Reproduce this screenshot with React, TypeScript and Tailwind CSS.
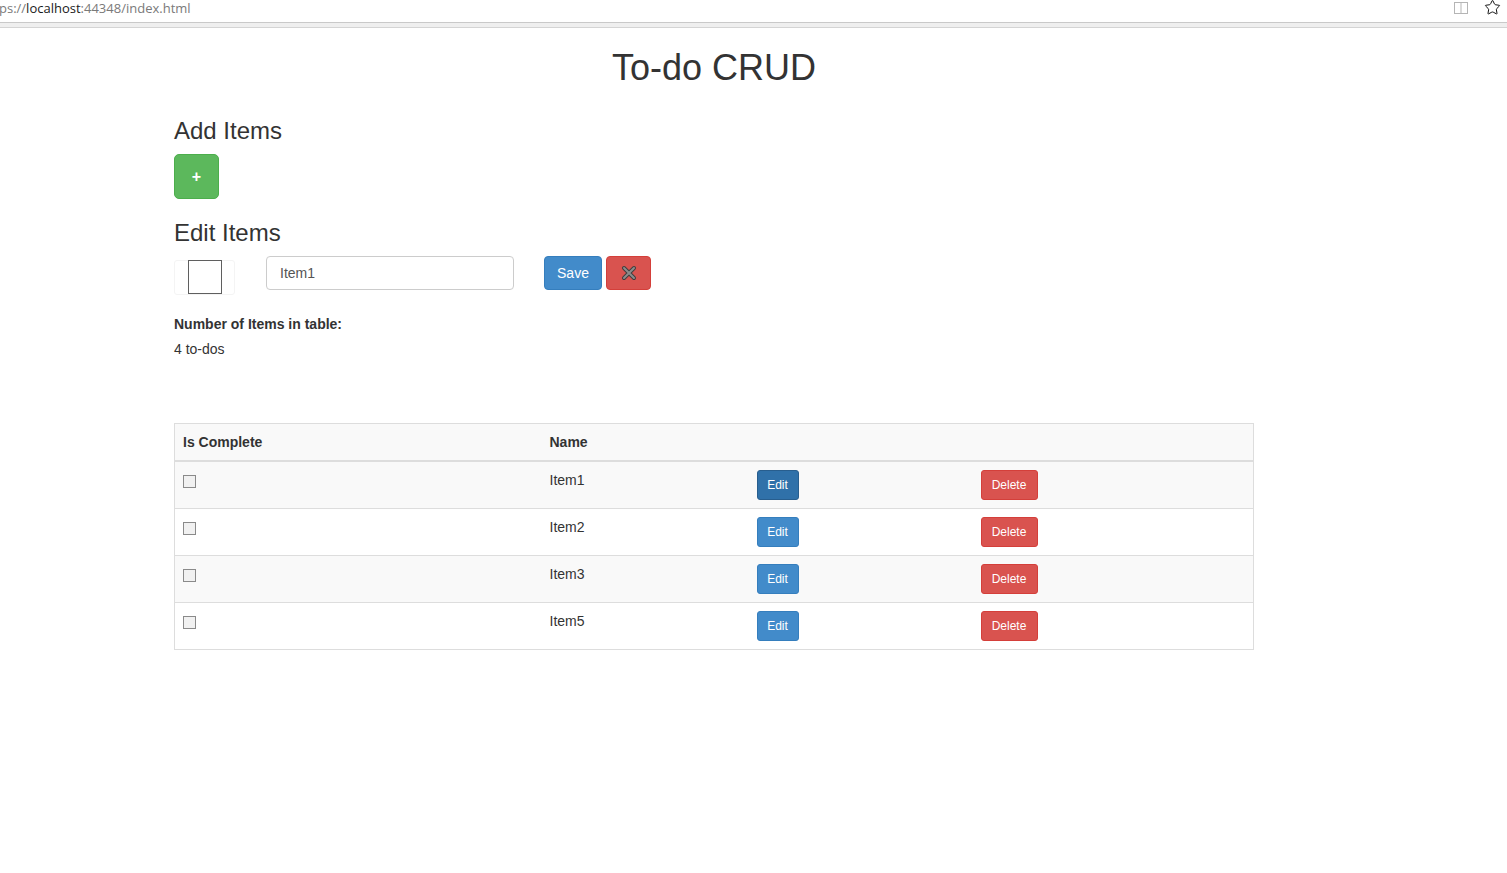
import { Star } from "lucide-react";

type Todo = { id: number; name: string; isComplete: boolean };

const todos: Todo[] = [
  { id: 1, name: "Item1", isComplete: false },
  { id: 2, name: "Item2", isComplete: false },
  { id: 3, name: "Item3", isComplete: false },
  { id: 5, name: "Item5", isComplete: false },
];

function BrowserBar() {
  return (
    <div>
      <div className="h-[22px] flex items-center justify-between bg-white font-['Open_Sans',sans-serif] text-[13px] leading-none">
        <div className="text-[#7a7a7a] -ml-[1px] -mt-[6px]">
          ps://<span className="text-[#1a1a1a]">localhost</span>:44348/index.html
        </div>
        <div className="flex items-center gap-[15px] mr-[6px] -mt-[7px]">
          <svg width="16" height="14" viewBox="0 0 16 14" fill="none" stroke="#b5b5b5" strokeWidth="1">
            <rect x="1.5" y="1.5" width="13" height="11" />
            <path d="M8 1.5v11" />
          </svg>
          <Star className="h-[17px] w-[17px]" strokeWidth={1.4} color="#111" />
        </div>
      </div>
      <div className="h-[6px] border-t border-b border-t-[#c9c9c9] border-b-[#d4d4d4] bg-[#efefef]" />
    </div>
  );
}

function Checkbox() {
  return <span className="block w-[13px] h-[13px] mt-[5px] border border-[#8a8a8a] bg-[#f1f1f1]" />;
}

function CancelIcon() {
  return (
    <svg width="16" height="16" viewBox="0 0 16 16" fill="none" strokeLinecap="round">
      <path d="M3 3l10 10M13 3L3 13" stroke="#3d3d3d" strokeWidth="4" />
      <path d="M3 3l10 10M13 3L3 13" stroke="#8c8c8c" strokeWidth="2" />
    </svg>
  );
}

export default function App() {
  return (
    <div className="min-h-[873px] bg-white text-[#333] font-['Liberation_Sans',Arial,sans-serif] text-[14px] leading-[20px]">
      <BrowserBar />
      <div className="ml-[174px] w-[1080px]">
        <h1 className="mt-[20px] text-center text-[36px] leading-[40px]">To-do CRUD</h1>

        <h3 className="mt-[30px] text-[24px] leading-[26px]">Add Items</h3>
        <button className="mt-[10px] w-[45px] h-[45px] rounded-[5px] bg-[#5cb85c] border border-[#4cae4c] text-white font-bold text-[16px] flex items-center justify-center">
          +
        </button>

        <h3 className="mt-[21px] text-[24px] leading-[26px]">Edit Items</h3>
        <div className="mt-[10px] flex items-start">
          <div className="mt-[4px] w-[61px] h-[35px] rounded-[3px] border border-[#f4f4f4] bg-white">
            <div className="-mt-[1px] ml-[13px] w-[34px] h-[34px] border border-[#5f5f5f]" />
          </div>
          <input
            readOnly
            value="Item1"
            className="ml-[31px] w-[248px] h-[34px] px-[13px] rounded-[4px] border border-[#ccc] text-[14px] text-[#555] outline-none"
          />
          <button className="ml-[30px] w-[58px] h-[34px] rounded-[4px] bg-[#428bca] border border-[#357ebd] text-white text-[14px]">
            Save
          </button>
          <button className="ml-[4px] w-[45px] h-[34px] rounded-[4px] bg-[#d9534f] border border-[#d43f3a] flex items-center justify-center">
            <CancelIcon />
          </button>
        </div>

        <div className="mt-[19px] font-bold">Number of Items in table:</div>
        <p className="mt-[5px]">4 to-dos</p>

        <table className="mt-[64px] w-[1080px] table-fixed border-collapse border border-[#ddd]">
          <colgroup>
            <col className="w-[367px]" />
            <col className="w-[207px]" />
            <col className="w-[224px]" />
            <col />
          </colgroup>
          <thead>
            <tr className="bg-[#f9f9f9]">
              <th className="p-[8px] text-left font-bold border-b-2 border-[#ddd]">Is Complete</th>
              <th className="p-[8px] text-left font-bold border-b-2 border-[#ddd]">Name</th>
              <th className="p-[8px] border-b-2 border-[#ddd]" />
              <th className="p-[8px] border-b-2 border-[#ddd]" />
            </tr>
          </thead>
          <tbody>
            {todos.map((t, i) => (
              <tr key={t.id} className={`border-t border-[#ddd] ${i % 2 === 0 ? "bg-[#f9f9f9]" : "bg-white"}`}>
                <td className="px-[8px] pt-[8px] pb-[7px] align-top">
                  <Checkbox />
                </td>
                <td className="px-[8px] pt-[8px] align-top">{t.name}</td>
                <td className="px-[8px] pt-[8px] pb-[8px] align-top">
                  <button
                    className={`h-[30px] w-[42px] rounded-[3px] text-white text-[12px] ${
                      i === 0 ? "bg-[#3071a9] border border-[#285e8e]" : "bg-[#428bca] border border-[#357ebd]"
                    }`}
                  >
                    Edit
                  </button>
                </td>
                <td className="px-[8px] pt-[8px] pb-[8px] align-top">
                  <button className="h-[30px] w-[57px] rounded-[3px] bg-[#d9534f] border border-[#d43f3a] text-white text-[12px]">
                    Delete
                  </button>
                </td>
              </tr>
            ))}
          </tbody>
        </table>
      </div>
    </div>
  );
}
